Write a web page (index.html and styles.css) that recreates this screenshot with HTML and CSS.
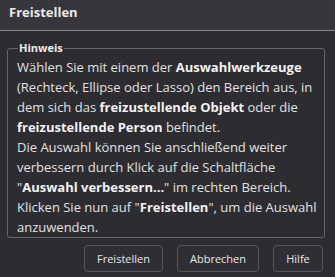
FILE: index.html
```html
<!DOCTYPE html>
<html lang="de">
<head>
<meta charset="utf-8">
<link rel="stylesheet" href="styles.css">
</head>
<body>
<div class="dialog">
  <header class="titlebar">Freistellen</header>
  <main class="content">
    <fieldset class="hint">
      <legend>Hinweis</legend>
      <p class="text">Wählen Sie mit einem der <b>Auswahlwerkzeuge</b><br>(Rechteck, Ellipse oder Lasso) den Bereich aus, in<br>dem sich das <b>freizustellende Objekt</b> oder die<br><b>freizustellende Person</b> befindet.<br>Die Auswahl können Sie anschließend weiter<br>verbessern durch Klick auf die Schaltfläche<br>"<b>Auswahl verbessern...</b>" im rechten Bereich.<br>Klicken Sie nun auf "<b>Freistellen</b>", um die Auswahl<br>anzuwenden.</p>
    </fieldset>
    <div class="buttons">
      <button class="btn btn-free">Freistellen</button>
      <button class="btn btn-cancel">Abbrechen</button>
      <button class="btn btn-help">Hilfe</button>
    </div>
  </main>
</div>
</body>
</html>
```
FILE: styles.css
```css
html, body {
  margin: 0;
  padding: 0;
  background: #2d2c31;
}
body {
  width: 335px;
  height: 277px;
  overflow: hidden;
  font-family: "Open Sans", "Noto Sans", sans-serif;
  color: #e6e6e6;
}
.dialog {
  display: flex;
  flex-direction: column;
  height: 277px;
}
.titlebar {
  height: 31px;
  box-sizing: border-box;
  background: #37363c;
  border-bottom: 1px solid #8a898e;
  padding: 2px 0 0 9px;
  font-weight: 700;
  font-size: 13px;
  line-height: 20px;
  color: #e8e8e8;
}
.content {
  padding: 10px 10px 0 7px;
  display: flex;
  flex-direction: column;
}
.hint {
  margin: 0;
  border: 1px solid #67666b;
  border-radius: 3px;
  padding: 2px 8px 8px 9px;
  height: 197px;
  box-sizing: border-box;
  min-width: 0;
}
.hint legend {
  padding: 0 1px;
  margin-left: 1px;
  font-size: 11px;
  font-weight: 700;
  color: #ececec;
  line-height: 14px;
}
.text {
  margin: 0;
  font-size: 13px;
  line-height: 20px;
  white-space: nowrap;
  color: #e2e2e2;
}
.text b {
  color: #f2f2f2;
}
.buttons {
  display: flex;
  justify-content: flex-end;
  gap: 14px;
  margin-top: 7px;
  padding-right: 2px;
}
.btn {
  height: 27px;
  box-sizing: border-box;
  background: #2f2e34;
  border: 1px solid #57565b;
  border-radius: 4px;
  color: #e6e6e6;
  font-family: "Open Sans", "Noto Sans", sans-serif;
  font-size: 11px;
  padding: 0;
}
.btn-free { width: 79px; }
.btn-cancel { width: 82px; }
.btn-help { width: 50px; }
```
